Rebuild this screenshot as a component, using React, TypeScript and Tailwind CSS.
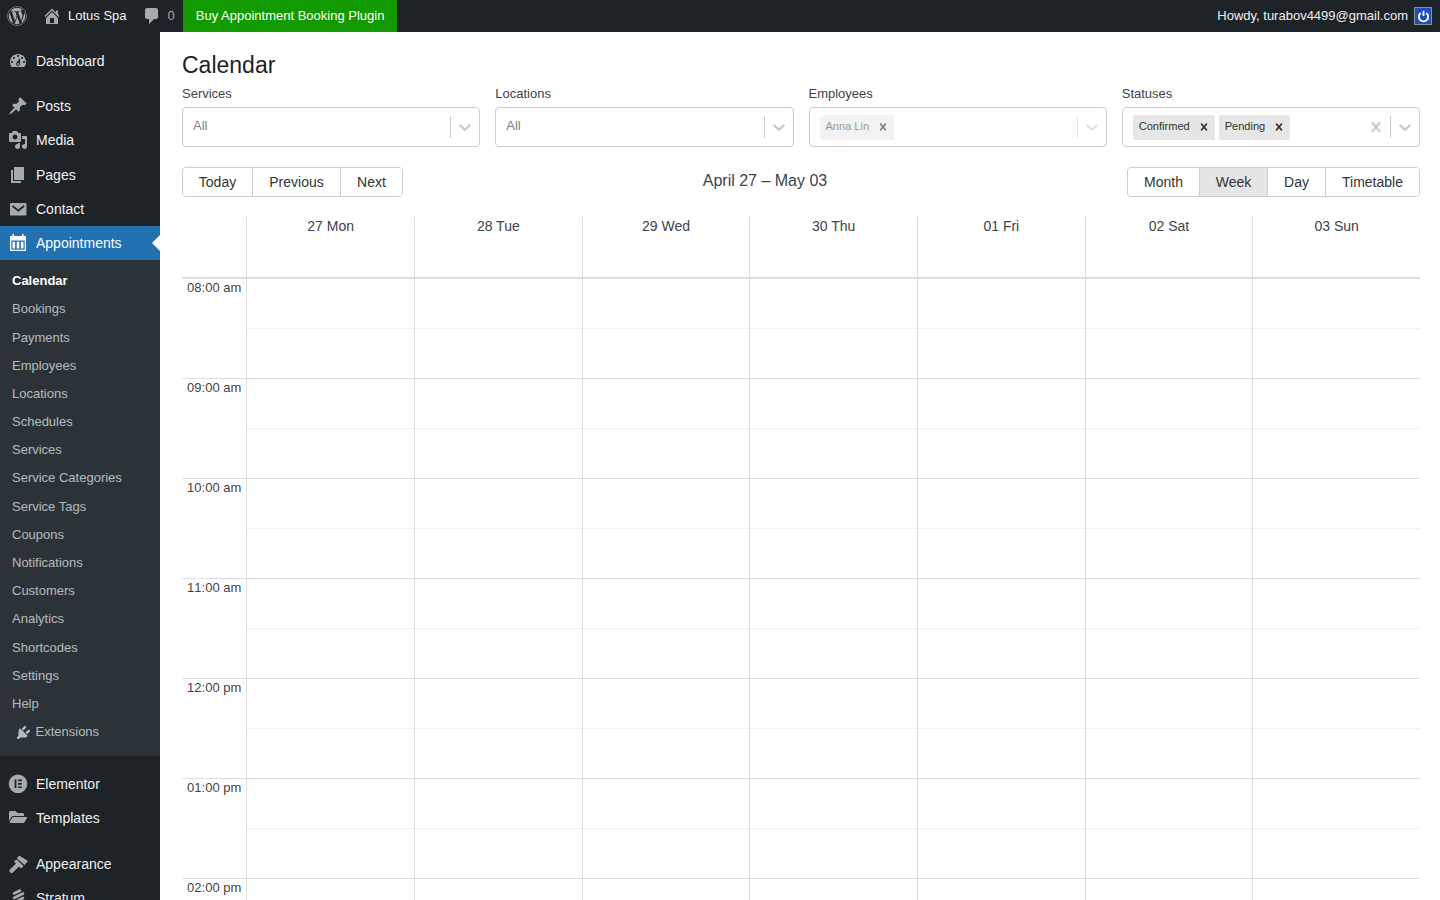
import React from 'react';
import { FaWordpress, FaFolderOpen } from 'react-icons/fa';

const P = {
  dashboard: 'M3.76 16h12.48c1.1-1.37 1.76-3.11 1.76-5 0-4.42-3.58-8-8-8s-8 3.58-8 8c0 1.89.66 3.63 1.76 5zM10 4c.55 0 1 .45 1 1s-.45 1-1 1-1-.45-1-1 .45-1 1-1zM6 6c.55 0 1 .45 1 1s-.45 1-1 1-1-.45-1-1 .45-1 1-1zm8 0c.55 0 1 .45 1 1s-.45 1-1 1-1-.45-1-1 .45-1 1-1zm-5.37 5.55L12 7v6c0 1.1-.9 2-2 2s-2-.9-2-2c0-.57.24-1.08.63-1.45zM4 10c.55 0 1 .45 1 1s-.45 1-1 1-1-.45-1-1 .45-1 1-1zm12 0c.55 0 1 .45 1 1s-.45 1-1 1-1-.45-1-1 .45-1 1-1zm-5 3c0-.55-.45-1-1-1s-1 .45-1 1 .45 1 1 1 1-.45 1-1z',
  post: 'M10.44 3.02l1.82-1.82 6.36 6.35-1.83 1.82c-1.05-.68-2.48-.57-3.41.36l-.75.75c-.92.93-1.04 2.35-.35 3.41l-1.83 1.82-2.41-2.41-2.8 2.79c-.42.42-3.38 2.71-3.8 2.29s1.86-3.39 2.28-3.81l2.79-2.79L4.1 9.36l1.83-1.82c1.05.69 2.48.57 3.4-.36l.75-.75c.93-.92 1.05-2.35.36-3.41z',
  media: 'M13 11V4c0-.55-.45-1-1-1h-1.67L9 1H5L3.67 3H2c-.55 0-1 .45-1 1v7c0 .55.45 1 1 1h10c.55 0 1-.45 1-1zM7 4.5c1.38 0 2.5 1.12 2.5 2.5S8.38 9.5 7 9.5 4.5 8.38 4.5 7 5.62 4.5 7 4.5zM14 6h5v10.5c0 1.38-1.12 2.5-2.5 2.5S14 17.88 14 16.5s1.12-2.5 2.5-2.5c.17 0 .34.02.5.05V9h-3V6zm-4 8.05V13h2v3.5c0 1.38-1.12 2.5-2.5 2.5S7 17.88 7 16.5 8.12 14 9.5 14c.17 0 .34.02.5.05z',
  page: 'M6 15V2h10v13H6zm-1 1h8v2H3V5h2v11z',
  mail: 'M3 4h14.500a1 1 0 0 1 1 1v10.500a1 1 0 0 1-1 1H3a1 1 0 0 1-1-1V5a1 1 0 0 1 1-1zM5 6.300L3.900 7.700 10.250 12.700 16.600 7.700 15.500 6.300 10.250 10.400z',
  home: 'M16 8.5l1.53 1.53-1.06 1.06L10 4.62l-6.47 6.47-1.06-1.06L10 2.5l4 4v-2h2v4zm-6-2.46l6 5.99V18H4v-5.97zM12 17v-5H8v5h4z',
  comment: 'M5 2h9c1.1 0 2 .9 2 2v7c0 1.1-.9 2-2 2h-2l-5 5v-5H5c-1.1 0-2-.9-2-2V4c0-1.1.9-2 2-2z',
  calendar: 'M2 3h2.500V1h1.500v2h8V1h1.500v2H18v15H2V3zM3.300 7.500v9.200h13.400V7.500H3.300zM4.500 8.700h2.600v6.800H4.500V8.700zm4.200 0h2.600v6.800H8.700V8.700zm4.200 0h2.600v6.800h-2.600V8.700z',
  appearance: 'M11 1.500 20 7l-3.500 4L9 4.500 11 1.500zM8.500 5.500l7 6.500-2.500 2.500-2-2L4.700 18.800c-.6.6-1.400.6-2 0l-1-1c-.6-.6-.6-1.400 0-2L8 9.500l-2-2 2.500-2z',
  plugin: 'M13.11 4.36L9.87 7.6 8 5.73l3.24-3.24c.35-.34 1.05-.2 1.56.32.52.51.66 1.21.31 1.55zm-8 1.77l.91-1.12 9.01 9.01-1.19.84c-.71.71-2.63 1.16-3.82 1.16H6.14L4.9 17.26c-.59.59-1.54.59-2.12 0-.59-.58-.59-1.53 0-2.12l1.24-1.24v-3.88c0-1.13.4-3.19 1.09-3.89zm7.26 3.97l3.24-3.24c.34-.35 1.04-.21 1.55.31.52.51.66 1.21.31 1.55l-3.24 3.25z',
  elementor: 'M10 .5a9.300 9.300 0 1 0 0 18.600A9.300 9.300 0 0 0 10 .5zM6.600 5.500h1.800v8.600H6.600V5.500zm3.400 0h3.800v1.700H10V5.500zm0 3.450h3.800v1.700H10V8.950zm0 3.450h3.800v1.700H10v-1.700z',
  x: 'M14.348 14.849c-0.469 0.469-1.229 0.469-1.697 0l-2.651-3.030-2.651 3.029c-0.469 0.469-1.229 0.469-1.697 0-0.469-0.469-0.469-1.229 0-1.697l2.758-3.15-2.759-3.152c-0.469-0.469-0.469-1.228 0-1.697s1.228-0.469 1.697 0l2.652 3.031 2.651-3.031c0.469-0.469 1.228-0.469 1.697 0s0.469 1.229 0 1.697l-2.758 3.152 2.758 3.15c0.469 0.469 0.469 1.229 0 1.698z',
  chevron: 'M4.516 7.548c0.436-0.446 1.043-0.481 1.576 0l3.908 3.747 3.908-3.747c0.533-0.481 1.141-0.446 1.574 0 0.436 0.445 0.408 1.197 0 1.615-0.406 0.418-4.695 4.502-4.695 4.502-0.217 0.223-0.502 0.335-0.787 0.335s-0.57-0.112-0.789-0.335c0 0-4.287-4.084-4.695-4.502s-0.436-1.17 0-1.615z',
};

const Ico = ({ d, className }: { d: string; className: string }) => (
  <svg viewBox="0 0 20 20" fill="currentColor" className={className}>
    <path d={d} fillRule="evenodd" />
  </svg>
);

const Stratum = ({ className }: { className: string }) => (
  <svg viewBox="0 0 20 20" fill="none" stroke="currentColor" strokeWidth="2.6" strokeLinecap="round" className={className}>
    <path d="M6 4.500 12 1.500M6 9l9-4.500M6 13.500l9-4.500M9 17l6-3.500" />
  </svg>
);

const MenuItem = ({ icon, label, active }: { icon: React.ReactNode; label: string; active?: boolean }) => (
  <div className={`relative flex h-[34.2px] items-center text-[14px] leading-[18.2px] ${active ? 'bg-[#2271b1] text-white' : 'text-[#f0f0f1]'}`}>
    <span className={`flex w-[36px] shrink-0 items-center justify-center ${active ? 'text-white' : 'text-[#a7aaad]'}`}>{icon}</span>
    <span>{label}</span>
    {active && <span className="absolute right-0 top-[9px] h-0 w-0 border-y-[8px] border-r-[8px] border-y-transparent border-r-white" />}
  </div>
);

const subs = ['Bookings', 'Payments', 'Employees', 'Locations', 'Schedules', 'Services', 'Service Categories', 'Service Tags', 'Coupons', 'Notifications', 'Customers', 'Analytics', 'Shortcodes', 'Settings', 'Help'];

const Sidebar = () => (
  <aside className="h-[868px] w-[160px] shrink-0 overflow-hidden bg-[#1d2327] pt-[12px]">
    <MenuItem label="Dashboard" icon={<Ico d={P.dashboard} className="h-[20px] w-[20px]" />} />
    <div className="h-[11px]" />
    <MenuItem label="Posts" icon={<Ico d={P.post} className="h-[20px] w-[20px]" />} />
    <MenuItem label="Media" icon={<Ico d={P.media} className="h-[20px] w-[20px]" />} />
    <MenuItem label="Pages" icon={<Ico d={P.page} className="h-[20px] w-[20px]" />} />
    <MenuItem label="Contact" icon={<Ico d={P.mail} className="h-[20px] w-[20px]" />} />
    <MenuItem active label="Appointments" icon={<Ico d={P.calendar} className="h-[20px] w-[20px]" />} />
    <div className="bg-[#2c3338] pb-[9.82px] pt-[6.98px] text-[13px] leading-[18.2px] text-[#f0f6fcb3]">
      <div className="py-[5px] pl-[12px] font-semibold text-white">Calendar</div>
      {subs.map((s) => (
        <div key={s} className={`pl-[12px] ${s === 'Service Categories' || s === 'Analytics' ? 'pb-[5.3px] pt-[4.7px]' : 'py-[5px]'}`}>{s}</div>
      ))}
      <div className="flex items-center py-[5px] pl-[15px]">
        <Ico d={P.plugin} className="mr-[3.5px] h-[17px] w-[17px] text-[#f0f6fcb3]" />
        Extensions
      </div>
    </div>
    <div className="h-[10.8px]" />
    <MenuItem label="Elementor" icon={<Ico d={P.elementor} className="h-[20px] w-[20px]" />} />
    <MenuItem label="Templates" icon={<FaFolderOpen className="mt-[-3px] h-[18px] w-[18px]" />} />
    <div className="h-[11.8px]" />
    <MenuItem label="Appearance" icon={<Ico d={P.appearance} className="h-[20px] w-[20px]" />} />
    <MenuItem label="Stratum" icon={<Stratum className="h-[20px] w-[20px]" />} />
  </aside>
);

const TopBar = () => (
  <header className="flex h-[32px] items-center justify-between bg-[#1d2327] text-[13px] text-[#f0f0f1]">
    <div className="flex h-full items-center">
      <FaWordpress className="ml-[7px] h-[20px] w-[20px] text-[#a7aaad]" />
      <Ico d={P.home} className="ml-[15px] h-[20px] w-[20px] text-[#a7aaad]" />
      <span className="ml-[6px]">Lotus Spa</span>
      <Ico d={P.comment} className="ml-[15px] h-[20px] w-[20px] text-[#a7aaad]" />
      <span className="ml-[6px] text-[#a7aaad]">0</span>
      <span className="ml-[8px] flex h-full items-center bg-[#129a00] px-[13px] text-white">Buy Appointment Booking Plugin</span>
    </div>
    <div className="flex items-center pr-[8px]">
      <span>Howdy, turabov4499@gmail.com</span>
      <span className="ml-[6px] flex h-[18px] w-[18px] items-center justify-center border border-[#8c8f94] bg-[#1e4fc0]">
        <svg viewBox="0 0 14 14" fill="none" stroke="white" strokeWidth="2" className="h-[13px] w-[13px]">
          <path d="M4 3.2a5 5 0 1 0 6 0" />
          <path d="M7 1v5.5" />
        </svg>
      </span>
    </div>
  </header>
);

const Chip = ({ label, dim }: { label: string; dim?: boolean }) => (
  <div className={`flex h-[25px] items-center rounded-[2px] ${dim ? 'bg-[#f2f2f2] text-[#999999]' : 'bg-[#e6e6e6] text-[#333333]'}`}>
    <span className="mt-[-1px] pl-[6px] pr-[3px] text-[11.05px]">{label}</span>
    <span className="flex w-[22px] items-center justify-center">
      <Ico d={P.x} className={`h-[14px] w-[14px] ${dim ? 'text-[#808080]' : 'text-[#333333]'}`} />
    </span>
  </div>
);

const Select = ({ label, chips, dim, clear }: { label: string; chips?: string[]; dim?: boolean; clear?: boolean }) => (
  <div>
    <div className="mb-[4px] text-[13px] leading-[18px] text-[#3c434a]">{label}</div>
    <div className="flex h-[40px] items-center rounded-[4px] border border-[#cccccc] bg-white">
      <div className="flex min-w-0 flex-1 items-center gap-[4px] pl-[10px]">
        {chips ? chips.map((c) => <Chip key={c} label={c} dim={dim} />) : <span className="mt-[-2px] text-[13px] text-[#808080]">All</span>}
      </div>
      {clear && <Ico d={P.x} className="mr-[4px] h-[20px] w-[20px] text-[#cccccc]" />}
      <span className={`h-[22px] w-px ${dim ? 'bg-[#e6e6e6]' : 'bg-[#cccccc]'}`} />
      <span className="flex w-[28px] justify-center">
        <Ico d={P.chevron} className={`h-[20px] w-[20px] ${dim ? 'text-[#e6e6e6]' : 'text-[#cccccc]'}`} />
      </span>
    </div>
  </div>
);

const BtnGroup = ({ items, active }: { items: { t: string; w: string }[]; active?: string }) => (
  <div className="flex h-[30px] overflow-hidden rounded-[4px] border border-[#cccccc] text-[14px] text-[#333333]">
    {items.map((it, i) => (
      <div key={it.t} className={`flex items-center justify-center ${it.w} ${i > 0 ? 'border-l border-[#cccccc]' : ''} ${it.t === active ? 'bg-[#e6e6e6]' : 'bg-white'}`}>
        {it.t}
      </div>
    ))}
  </div>
);

const days = ['27 Mon', '28 Tue', '29 Wed', '30 Thu', '01 Fri', '02 Sat', '03 Sun'];
const hours = ['08:00 am', '09:00 am', '10:00 am', '11:00 am', '12:00 pm', '01:00 pm', '02:00 pm'];

const gridCols = 'grid grid-cols-[64.3px_repeat(7,1fr)]';

const Calendar = () => (
  <div className="mt-[20px]">
    <div className={`${gridCols} h-[60px] text-[14px] text-[#3c434a]`}>
      <div />
      {days.map((d) => (
        <div key={d} className="border-l border-[#dddddd] text-center leading-[18px]">{d}</div>
      ))}
    </div>
    <div className="h-[2px] bg-[#dddddd]" />
    {hours.map((h, i) => (
      <div key={h} className={`${gridCols} ${i > 0 ? 'h-[100px] border-t border-[#dddddd]' : 'h-[99px]'}`}>
        <div className="pr-[5px] text-right text-[13px] leading-[18px] text-[#3c434a] [font-kerning:none]">{h}</div>
        {days.map((d) => (
          <div key={d} className="border-l border-[#dddddd]">
            <div className="h-[50px] border-b border-[#f0f0f0]" />
          </div>
        ))}
      </div>
    ))}
  </div>
);

export default function App() {
  return (
    <div className="flex h-screen flex-col overflow-hidden bg-white font-['Liberation_Sans',Arial,sans-serif]">
      <TopBar />
      <div className="flex min-h-0 flex-1">
        <Sidebar />
        <main className="min-w-0 flex-1 overflow-hidden pl-[22px] pr-[20px]">
          <h1 className="pt-[19px] text-[23px] leading-[29px] text-[#1d2327]">Calendar</h1>
          <div className="mt-[5px] grid grid-cols-4 gap-[15px]">
            <Select label="Services" />
            <Select label="Locations" />
            <Select label="Employees" chips={['Anna Lin']} dim />
            <Select label="Statuses" chips={['Confirmed', 'Pending']} clear />
          </div>
          <div className="mt-[20px] flex items-start justify-between">
            <BtnGroup items={[{ t: 'Today', w: 'w-[69px]' }, { t: 'Previous', w: 'w-[88px]' }, { t: 'Next', w: 'w-[62px]' }]} />
            <div className="text-[16px] leading-[28px] text-[#3c434a] [font-kerning:none]">April 27 – May 03</div>
            <BtnGroup active="Week" items={[{ t: 'Month', w: 'w-[71px]' }, { t: 'Week', w: 'w-[68px]' }, { t: 'Day', w: 'w-[58px]' }, { t: 'Timetable', w: 'w-[94px]' }]} />
          </div>
          <Calendar />
        </main>
      </div>
    </div>
  );
}
